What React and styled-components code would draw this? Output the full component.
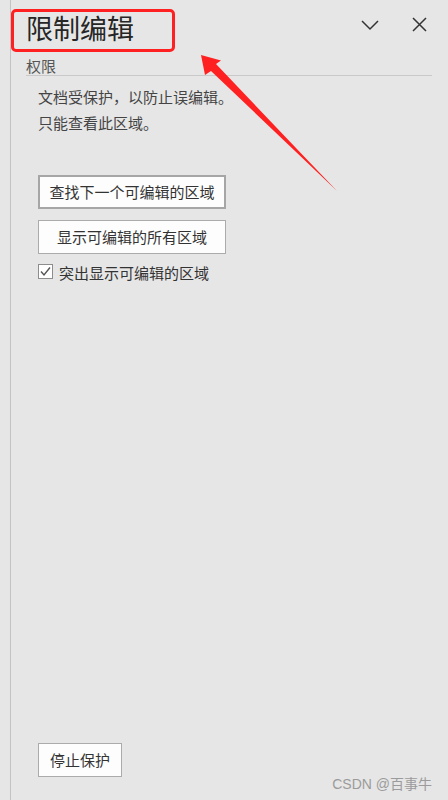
import React from "react";
import styled, { createGlobalStyle } from "styled-components";

const GlobalStyle = createGlobalStyle`
  html, body {
    margin: 0;
    padding: 0;
    background: #e6e6e6;
  }
  body {
    font-family: "Noto Sans CJK SC", "Noto Sans", sans-serif;
  }
  * {
    box-sizing: border-box;
  }
`;

const Pane = styled.div`
  position: relative;
  width: 448px;
  height: 800px;
  display: flex;
  background: #e6e6e6;
  overflow: hidden;
`;

const Gutter = styled.div`
  width: 10px;
  flex: none;
`;

const TaskPane = styled.section`
  flex: 1;
  display: flex;
  flex-direction: column;
  border-left: 1px solid #c3c3c3;
  padding: 0 16px 23px 15px;
`;

const Header = styled.header`
  display: flex;
  align-items: flex-start;
  height: 52px;
`;

const Title = styled.h1`
  margin: 14px 0 0;
  font-size: 27px;
  line-height: 28px;
  font-weight: 400;
  color: #262626;
`;

const HeaderTools = styled.div`
  margin-left: auto;
  margin-top: 13px;
  display: flex;
  gap: 26px;
`;

const IconButton = styled.button`
  width: 24px;
  height: 24px;
  padding: 0;
  border: 0;
  background: transparent;
  display: flex;
  align-items: center;
  justify-content: center;
  cursor: pointer;
`;

const SectionLabel = styled.div`
  margin-top: 4px;
  height: 20px;
  line-height: 19px;
  font-size: 15px;
  color: #555;
  border-bottom: 1px solid #c9c9c9;
`;

const Message = styled.p`
  margin: 8px 0 0 12px;
  font-size: 15px;
  line-height: 26px;
  color: #444;
`;

const Actions = styled.div`
  margin: 39px 0 0 12px;
  display: flex;
  flex-direction: column;
  align-items: flex-start;
  gap: 11px;
`;

const PaneButton = styled.button`
  width: ${({ $width }) => $width || "188px"};
  height: 34px;
  padding: 0;
  background: #fdfdfd;
  border: ${({ $focused }) => ($focused ? "2px solid #a6a6a6" : "1px solid #ababab")};
  font-family: inherit;
  font-size: 15px;
  line-height: 20px;
  color: #333;
  cursor: pointer;
`;

const CheckRow = styled.label`
  display: flex;
  align-items: center;
  height: 15px;
  font-size: 15px;
  line-height: 15px;
  color: #333;
`;

const CheckBox = styled.span`
  width: 15px;
  height: 15px;
  flex: none;
  margin-top: -2px;
  border: 1px solid #8d8d8d;
  background: #fff;
  display: flex;
  align-items: center;
  justify-content: center;
`;

const CheckText = styled.span`
  margin-left: 6px;
`;

const Spacer = styled.div`
  flex: 1;
`;

const Footer = styled.div`
  padding-left: 12px;
`;

const Watermark = styled.div`
  position: absolute;
  right: 16px;
  bottom: 8px;
  font-family: "Liberation Sans", "Noto Sans CJK SC", sans-serif;
  font-size: 14px;
  line-height: 16px;
  color: #9b9b9b;
`;

/* annotation drawn over the screenshot */
const RedFrame = styled.div`
  position: absolute;
  left: 11px;
  top: 9px;
  width: 164px;
  height: 43px;
  border: 3px solid #ff2121;
  border-radius: 5px;
  pointer-events: none;
`;

const ArrowLayer = styled.svg`
  position: absolute;
  left: 0;
  top: 0;
  pointer-events: none;
`;

const ChevronIcon = () => (
  <svg width="24" height="24" viewBox="0 0 24 24">
    <polyline points="4,8 12,16 20,8" fill="none" stroke="#333" strokeWidth="1.5" />
  </svg>
);

const CloseIcon = () => (
  <svg width="24" height="24" viewBox="0 0 24 24">
    <path d="M5 5 L18 18 M18 5 L5 18" fill="none" stroke="#333" strokeWidth="1.5" />
  </svg>
);

const CheckMark = () => (
  <svg width="13" height="13" viewBox="0 0 13 13">
    <polyline points="2,6.5 5,10 11,2.5" fill="none" stroke="#555" strokeWidth="1.4" />
  </svg>
);

export default function App() {
  return (
    <>
      <GlobalStyle />
      <Pane>
        <Gutter />
        <TaskPane>
          <Header>
            <Title>限制编辑</Title>
            <HeaderTools>
              <IconButton aria-label="任务窗格选项">
                <ChevronIcon />
              </IconButton>
              <IconButton aria-label="关闭">
                <CloseIcon />
              </IconButton>
            </HeaderTools>
          </Header>
          <SectionLabel>权限</SectionLabel>
          <Message>
            文档受保护，以防止误编辑。
            <br />
            只能查看此区域。
          </Message>
          <Actions>
            <PaneButton $focused>查找下一个可编辑的区域</PaneButton>
            <PaneButton>显示可编辑的所有区域</PaneButton>
            <CheckRow>
              <CheckBox>
                <CheckMark />
              </CheckBox>
              <CheckText>突出显示可编辑的区域</CheckText>
            </CheckRow>
          </Actions>
          <Spacer />
          <Footer>
            <PaneButton $width="84px">停止保护</PaneButton>
          </Footer>
        </TaskPane>
        <Watermark>CSDN @百事牛</Watermark>
        <RedFrame />
        <ArrowLayer width="448" height="800" viewBox="0 0 448 800">
          <polygon
            points="201,55 221,60.5 216,64 337,191 211,71 205,75"
            fill="#ff2121"
          />
        </ArrowLayer>
      </Pane>
    </>
  );
}
